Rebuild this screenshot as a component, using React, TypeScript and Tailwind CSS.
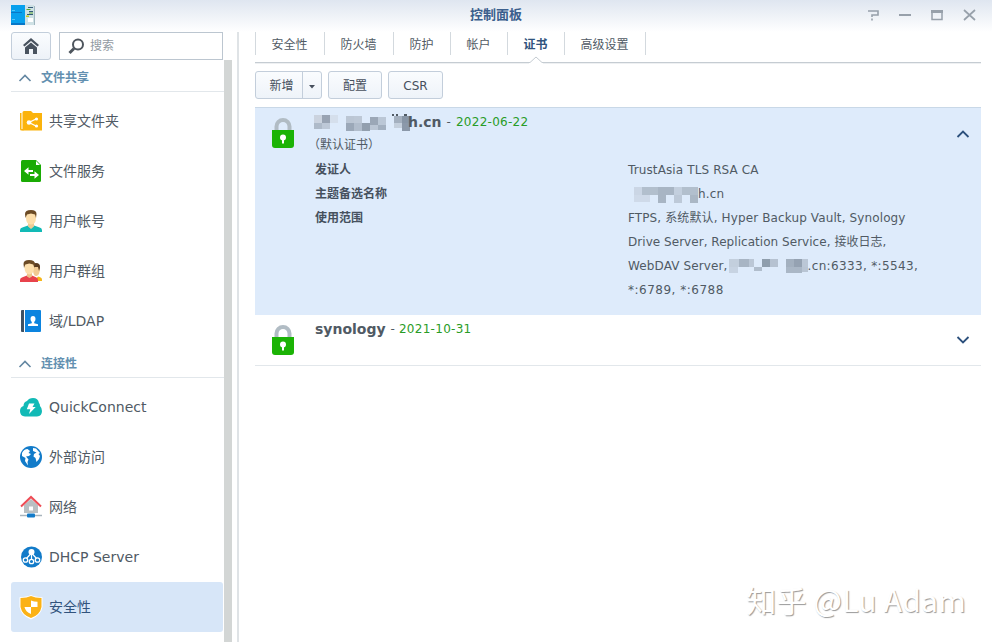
import type { ReactNode } from "react";

const lockIcon = (
  <svg width="24" height="32" viewBox="0 0 24 32" className="shrink-0">
    <path d="M5.500 13V9.500a6.500 6.500 0 0 1 13 0V13" fill="none" stroke="#b1bcc4" strokeWidth="4" />
    <path d="M1 13h22V28a3 3 0 0 1-3 3H4a3 3 0 0 1-3-3z" fill="#1bb305" />
    <circle cx="12" cy="20.500" r="3" fill="#fff" />
    <path d="M11 21h2v5.500h-2z" fill="#fff" />
  </svg>
);

const icons: Record<string, ReactNode> = {
  share: (
    <>
      <path d="M2.500 2.500Q2.500 1 4 1H11l2 2h9v17.500H2.500z" fill="#fbb30c" />
      <path d="M0 3h1.500v16h2v1.500H1.500Q0 20.500 0 19z" fill="#fbb30c" />
      <path d="M17 8.500l-8 4 8 4" fill="none" stroke="#fff" strokeWidth="1.300" />
      <circle cx="9" cy="12.500" r="2.300" fill="#fff" />
      <circle cx="16.500" cy="9" r="1.600" fill="#fff" />
      <circle cx="16.500" cy="16" r="1.600" fill="#fff" />
    </>
  ),
  file: (
    <>
      <path d="M2.500 0H16l5 5v15.500q0 1.500-1.500 1.500h-17Q1 22 1 20.500v-19Q1 0 2.500 0z" fill="#1aab04" />
      <path d="M16 1v4h4z" fill="#fff" />
      <path d="M4 11l4.500-3.800V10H13v2H8.500v2.800zM19 15l-4.500-3.800V14H10v2h4.500v2.800z" fill="#fff" />
    </>
  ),
  user: (
    <>
      <path d="M0 22v-2q0-2 3-2.800L8 15.500h6l5 1.700q3 .8 3 2.800v2z" fill="#12bab6" />
      <path d="M8 12h6v4.500L11 19l-3-2.500z" fill="#edcb96" />
      <path d="M6 5q0-4 5-4t5 4v3q0 6-5 6.500Q6 14 6 8z" fill="#fddfac" />
      <path d="M5.500 8L5 4q0-4 6-4 5.500 0 5.500 4L16 8l-1-3.500-4-1-4 1z" fill="#6c4b25" />
    </>
  ),
  group: (
    <>
      <path d="M14 21h8v-1.500q0-2-4-3z" fill="#f6b618" />
      <path d="M13 8q0-4 3.500-4T20 8q0 7-3.500 8T13 8z" fill="#f1ca92" />
      <path d="M12 7q0-4 4-4 4.500 0 4 5l-1 3-1-4z" fill="#593b20" />
      <path d="M0 22v-2q0-2 2.500-2.800L7 15.500h5l4 1.700q2 .8 2 2.800v2z" fill="#e8434c" />
      <path d="M7 12h5v4.500L9.500 18 7 16.500z" fill="#edc38c" />
      <path d="M4.500 5q0-4 4.700-4T14 5v3q0 5.500-4.800 6.500Q4.500 13.500 4.500 8z" fill="#fddfac" />
      <path d="M4 8l-.5-4Q3.500 0 9 0q6 0 6 4l-.7 4-1-3.500-4-1-4 1z" fill="#6c4b25" />
    </>
  ),
  ldap: (
    <>
      <path d="M1 1q0-1 1-1h2v22H2q-1 0-1-1z" fill="#3e5163" />
      <path d="M5 0h15q1 0 1 1v20q0 1-1 1H5z" fill="#0c84df" />
      <path d="M13 6q2.500 0 2.500 3 0 2-1.300 3v1.200l3.800 1V16H8v-1.800l3.800-1V12Q10.500 11 10.500 9q0-3 2.500-3z" fill="#fff" />
    </>
  ),
  quick: (
    <>
      <path d="M5 20.500Q0 20 0 15q0-4 3.500-5 0-4 3.500-5 2-3 6-3 5 0 6 5 1 1 1 3 2 2 2 5 0 5-5 5.500z" fill="#12bab6" />
      <path d="M9 7.500h5.500L12.500 11h3.200L9 18l1.300-4.800H6.800z" fill="#fff" />
    </>
  ),
  globe: (
    <>
      <circle cx="11" cy="11" r="11" fill="#127bc9" />
      <path d="M2 7q2-4 5.500-4L10 5 8.500 7 11 8 9 10l-3 .5 2.500 3-1 2.500L8 19.500 5 15l.5-3L2 10zM13 2l3 .5 4 4.500-1.500 1 1.500 2-1 3-2.500 3-1-4-2-1.500.5-2.500 2.500-1.500L13 5z" fill="#fff" />
    </>
  ),
  network: (
    <>
      <path d="M4 9l7-6 7 6v8H4z" fill="#b9bfc2" />
      <path d="M1 10.500L11 1l10 9.500" fill="none" stroke="#ee4c55" strokeWidth="2" />
      <path d="M9 10.500h4v4H9z" fill="#fff" />
      <path d="M0 19.500h22" stroke="#a8b4bd" strokeWidth="1.500" />
      <rect x="7" y="17.500" width="8" height="4" rx="1" fill="#127bc9" />
    </>
  ),
  dhcp: (
    <>
      <circle cx="11.500" cy="11" r="10.500" fill="#127bc9" />
      <path d="M11.500 6v8M11.500 7L6 13M11.500 7l5.500 6" stroke="#fff" strokeWidth="1.200" />
      <circle cx="11.500" cy="6" r="3" fill="#fff" />
      <g fill="#127bc9" stroke="#fff" strokeWidth="1.300">
        <circle cx="5.500" cy="14" r="2.200" />
        <circle cx="11.500" cy="15.500" r="2.200" />
        <circle cx="17.500" cy="14" r="2.200" />
      </g>
    </>
  ),
  shield: (
    <>
      <path d="M11 -1Q15 1 22.500 1.200V11Q21 19.500 11 23.500 1 19.500-.5 11V1.200Q7 1 11-1z" fill="#fff" />
      <path d="M11 0q4 2 10.500 2v9Q20 19 11 22 2 19 .5 11V2Q7 2 11 0z" fill="#fbb216" />
      <path d="M11 4.500q3 1.200 6.500 1.200V11H11zM11 11v7Q5.500 16 4.500 11z" fill="#fff" />
    </>
  ),
};

const sections = [
  {
    title: "文件共享",
    items: [
      { icon: "share", label: "共享文件夹" },
      { icon: "file", label: "文件服务" },
      { icon: "user", label: "用户帐号" },
      { icon: "group", label: "用户群组" },
      { icon: "ldap", label: "域/LDAP" },
    ],
  },
  {
    title: "连接性",
    items: [
      { icon: "quick", label: "QuickConnect" },
      { icon: "globe", label: "外部访问" },
      { icon: "network", label: "网络" },
      { icon: "dhcp", label: "DHCP Server" },
      { icon: "shield", label: "安全性" },
    ],
  },
];

const tabs = [
  { label: "安全性", width: "w-[69px]" },
  { label: "防火墙", width: "w-[69px]" },
  { label: "防护", width: "w-[57px]" },
  { label: "帐户", width: "w-[57px]" },
  { label: "证书", width: "w-[57px]" },
  { label: "高级设置", width: "w-[81px]" },
];

// x, y, width, height, fill
type Tile = [number, number, number, number, string];

const nameTiles: Tile[] = [
  [0, 2, 8, 8, "#cbd3df"], [8, 2, 8, 8, "#98a3b3"], [16, 2, 8, 8, "#d5dfec"], [0, 10, 8, 6, "#aebac9"], [8, 10, 8, 6, "#bdc8d7"],
  [32, 3, 8, 7, "#bbc6d4"], [40, 3, 8, 7, "#bdc8d6"], [32, 10, 8, 8, "#9ba8b8"], [40, 10, 8, 8, "#b1bdcc"], [48, 10, 8, 8, "#929fae"],
  [56, 4, 8, 8, "#9ba7b7"], [64, 4, 8, 8, "#bbc7d6"], [56, 12, 8, 5, "#bbc6d5"], [64, 12, 8, 5, "#a3b0c0"],
  [78, 1, 2, 2, "#505a64"], [82, 1, 2, 2, "#505a64"], [90, 1, 3, 2, "#505a64"],
  [80, 3, 8, 7, "#a4b0bf"], [88, 3, 8, 7, "#8795a6"], [80, 10, 8, 5, "#c4cfdc"], [88, 10, 8, 8, "#8b98a9"],
];

const altTiles: Tile[] = [
  [0, 2, 8, 8, "#cbd6e5"], [8, 2, 16, 8, "#b2bfcd"], [24, 2, 16, 8, "#a8b5c4"], [40, 2, 8, 8, "#c3cfde"], [48, 2, 16, 8, "#b2bfcd"],
  [0, 10, 16, 7, "#cfdae9"], [24, 10, 8, 8, "#a8b5c4"], [40, 10, 8, 8, "#bdc9d8"], [56, 10, 8, 8, "#aab7c5"],
];

const scopeTiles: Tile[] = [
  [0, 2, 10, 8, "#c3cfdd"], [10, 2, 10, 8, "#a8b5c4"], [20, 2, 5, 8, "#bbc7d6"], [0, 10, 9, 6, "#c7d3e2"],
  [25, 10, 8, 4, "#b0bdcc"], [33, 2, 8, 8, "#8f9ead"], [41, 2, 8, 8, "#b6c2d1"],
  [57, 2, 8, 8, "#a3b0bf"], [65, 2, 8, 8, "#95a2b2"], [73, 2, 6, 8, "#bbc7d6"], [57, 10, 16, 6, "#aab7c6"], [73, 10, 6, 5, "#b9c5d4"],
];

function Mosaic({ tiles, width, className }: { tiles: Tile[]; width: number; className?: string }) {
  return (
    <svg width={width} height="18" viewBox={`0 0 ${width} 18`} className={className} shapeRendering="crispEdges">
      {tiles.map(([x, y, w, h, fill], i) => (
        <rect key={i} x={x} y={y} width={w} height={h} fill={fill} />
      ))}
    </svg>
  );
}

function Chevron({ up = false, className = "" }: { up?: boolean; className?: string }) {
  return (
    <svg width="14" height="8" viewBox="0 0 14 8" className={className} fill="none" stroke="currentColor">
      <path d={up ? "M1.500 7L7 1.500 12.500 7" : "M1.500 1L7 6.500 12.500 1"} />
    </svg>
  );
}

function TitleBar() {
  return (
    <header className="flex h-8 items-center justify-between bg-linear-to-b from-[#dfe6f0] to-white px-[10px]">
      <div className="flex-1">
        <svg width="26" height="22" viewBox="0 0 26 22" className="-mt-[2px]">
          <path d="M14 1h10v20H14z" fill="#cfe1e5" />
          <path d="M24 2h1v19h-1z" fill="#a0b7c0" />
          <path d="M1 1h14v19H1z" fill="#08a0ed" />
          <path d="M1 19h14v2H1zM1 8h11v1H1z" fill="#0877c7" />
          <path d="M2 6h3v1H2zM2 15h3v1H2z" fill="#55c7fa" />
          <path d="M18 3.500h5M19 7.500h4M17 10.500h6" stroke="#345b78" />
          <path d="M16.500 5.500h4M19 9h4" stroke="#5ca735" />
          <path d="M16 11.500h3v1.500h-3z" fill="#c5cf19" />
          <path d="M18 14h5v4h-5z" fill="#fff" />
        </svg>
      </div>
      <h1 className="-mt-[2px] pl-[6px] text-[13px] leading-5 font-bold text-[#3b5f8d]">控制面板</h1>
      <div className="flex flex-1 justify-end pr-[6px]">
        <svg width="110" height="14" viewBox="0 0 110 14" fill="none" stroke="#97a0aa" strokeWidth="2" className="-mt-[2px]">
          <path d="M2 3h10v4H6v2M6 10.500v2" strokeWidth="1.600" />
          <path d="M33 7h12" />
          <path d="M66 3.500h10v8H66z" strokeWidth="1.500" />
          <path d="M65 3.500h12" strokeWidth="3" />
          <path d="M98 2l11 10M109 2L98 12" strokeWidth="1.700" />
        </svg>
      </div>
    </header>
  );
}

function Sidebar() {
  return (
    <aside className="flex w-[239px] shrink-0 border-r-2 border-[#dfe3e6] pl-[11px]">
      <div className="w-[213px]">
        <div className="flex h-7 gap-2 pr-px">
          <button className="flex w-10 items-center justify-center rounded-[3px] border border-[#c3cedb] bg-linear-to-b from-[#fafcfe] to-[#edf2f8]">
            <svg width="18" height="18" viewBox="0 0 18 18" fill="#49535f">
              <path d="M9 1l8 7-1.500 1.500L9 4 2.500 9.500 1 8z" />
              <path d="M9 5.500l6 5V17h-4v-5H7v5H3v-6.500z" />
            </svg>
          </button>
          <div className="flex flex-1 items-center border border-[#bcc6d0] pl-2">
            <svg width="17" height="17" viewBox="0 0 17 17" fill="none" stroke="#4e555d" strokeWidth="2">
              <circle cx="10" cy="6.500" r="5" />
              <path d="M6 10.500L1.500 15" strokeWidth="3" />
            </svg>
            <span className="pl-[5px] text-[#929aa2]">搜索</span>
          </div>
        </div>
        {sections.map((section) => (
          <section key={section.title}>
            <h2 className="mb-1 flex h-8 items-center gap-[9px] border-b border-[#e2e7eb] pt-[5px] pl-[7px] font-bold text-[#6390b0]">
              <Chevron up className="text-[#6487a2] [stroke-width:1.6]" />
              {section.title}
            </h2>
            <ul>
              {section.items.map((item) => (
                <li
                  key={item.label}
                  className={`mr-px flex h-[50px] items-center gap-[7px] rounded-[3px] pl-[9px] text-sm ${
                    item.icon === "shield" ? "bg-[#d7e6f8] text-[#31537d]" : "text-[#505a64]"
                  }`}
                >
                  <svg width="22" height="22" viewBox="0 0 22 22" className="shrink-0 overflow-visible">{icons[item.icon]}</svg>
                  {item.label}
                </li>
              ))}
            </ul>
          </section>
        ))}
      </div>
      <div className="mt-7 w-2 bg-[#d3d6d5]" />
    </aside>
  );
}

function Tabs() {
  return (
    <nav className="flex h-[31px] border-b border-[#c5ccd2] shadow-[0_1px_0_#eef0f2]">
      <div className="flex h-[23px] border-l border-[#d3d9de]">
        {tabs.map((tab) => (
          <div
            key={tab.label}
            className={`relative flex items-center justify-center border-r border-[#d3d9de] pt-[2px] pr-px ${tab.width} ${
              tab.label === "证书" ? "font-bold text-[#31537d]" : "text-[#505a64]"
            }`}
          >
            {tab.label}
            {tab.label === "证书" && (
              <svg width="14" height="8" viewBox="0 0 14 8" className="absolute top-6 left-[21px]">
                <path d="M0 7l7-6 7 6v1H0z" fill="#fff" />
                <path d="M0 6.500h1l6-5.500 6 5.500h1" fill="none" stroke="#c5ccd2" />
              </svg>
            )}
          </div>
        ))}
      </div>
    </nav>
  );
}

const buttonClass =
  "flex h-7 items-center justify-center rounded-[3px] border border-[#c3cedb] bg-linear-to-b from-[#fafcfe] to-[#eef3f9] pt-px text-[#464f5c]";

function Toolbar() {
  return (
    <div className="flex gap-[6px] py-2">
      <div className={`${buttonClass} w-[67px]`}>
        <span className="flex-1 pl-[5px] text-center">新增</span>
        <span className="-mt-px flex h-[26px] w-[19px] items-center justify-center border-l border-[#c3cedb]">
          <svg width="6" height="4" viewBox="0 0 6 4" className="mt-[3px]">
            <path d="M0 0h6L3 3.500z" fill="#464f5c" />
          </svg>
        </span>
      </div>
      <button className={`${buttonClass} w-[54px]`}>配置</button>
      <button className={`${buttonClass} w-[55px]`}>CSR</button>
    </div>
  );
}

function CertificateList() {
  return (
    <div className="text-[#505a64]">
      <article className="flex h-[208px] border-t border-[#c9d8e7] bg-[#deebfb] pt-[9px] pl-4">
        {lockIcon}
        <div className="w-[333px] shrink-0 pl-5">
          <div className="-mt-px flex h-3 items-center whitespace-nowrap">
            <Mosaic tiles={nameTiles} width={97} className="-ml-px" />
            <span className="-ml-[3px] text-sm font-bold">h.cn</span>
            <span className="px-[5px]">-</span>
            <span className="tracking-[0.28px] text-[#299c26]">2022-06-22</span>
          </div>
          <p className="-ml-[7px] mt-[6px] mb-px leading-[23px]">（默认证书）</p>
          <dl className="leading-6 font-bold text-[#46515e]">
            <dt>发证人</dt>
            <dt>主题备选名称</dt>
            <dt>使用范围</dt>
          </dl>
        </div>
        <div className="flex-1 pt-[41px] leading-6 tracking-[0.12px] whitespace-nowrap">
          <p>TrustAsia TLS RSA CA</p>
          <p className="flex h-6 items-center pl-[6px]">
            <Mosaic tiles={altTiles} width={64} />
            h.cn
          </p>
          <p>FTPS, 系统默认, Hyper Backup Vault, Synology</p>
          <p className="tracking-[0.04px]">Drive Server, Replication Service, 接收日志,</p>
          <p className="flex h-6 items-center">
            WebDAV Server,
            <Mosaic tiles={scopeTiles} width={79} className="ml-px" />
            <span className="tracking-[0.35px]">.cn:6333, *:5543,</span>
          </p>
          <p className="tracking-[0.5px]">*:6789, *:6788</p>
        </div>
        <Chevron up className="mt-[13px] mr-[11px] shrink-0 text-[#2c507c] [stroke-width:1.8]" />
      </article>
      <article className="flex h-[51px] border-b border-[#e2e7eb] pt-[9px] pl-4">
        {lockIcon}
        <div className="-mt-px flex h-3 flex-1 items-center pl-5">
          <span className="text-sm font-bold">synology</span>
          <span className="px-[5px]">-</span>
          <span className="-ml-px tracking-[0.28px] text-[#299c26]">2021-10-31</span>
        </div>
        <Chevron className="mt-3 mr-[11px] text-[#2c507c] [stroke-width:1.8]" />
      </article>
    </div>
  );
}

export default function App() {
  return (
    <div className="relative flex h-[642px] w-[992px] flex-col overflow-hidden bg-white font-['DejaVu_Sans','Noto_Sans_CJK_SC',sans-serif] text-xs">
      <TitleBar />
      <div className="flex min-h-0 flex-1">
        <Sidebar />
        <main className="flex-1 pr-[11px] pl-4">
          <Tabs />
          <Toolbar />
          <CertificateList />
        </main>
      </div>
      <div className="absolute right-[26px] bottom-[21px] font-['Noto_Sans_CJK_SC',sans-serif] text-[30px] leading-[44px] tracking-[0.2px] whitespace-nowrap text-white [text-shadow:1px_1px_1px_#999]">
        知乎 @Lu Adam
      </div>
    </div>
  );
}
